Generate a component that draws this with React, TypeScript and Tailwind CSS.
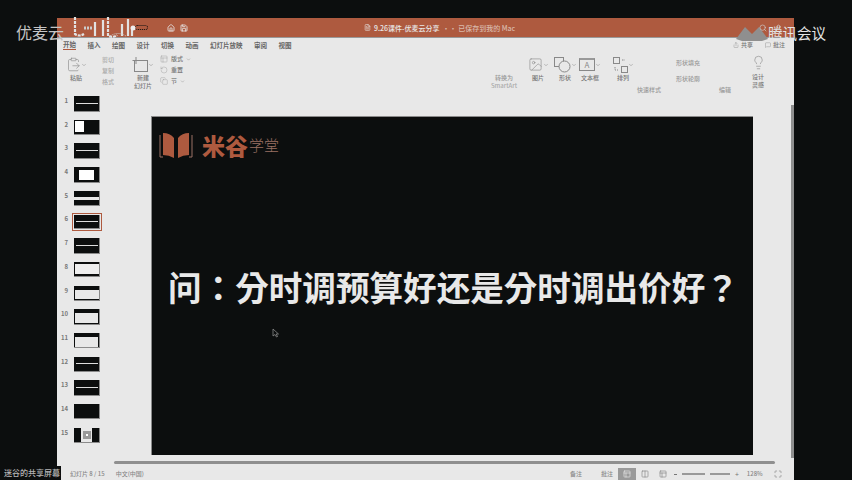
import { ChevronDown, Home, Save, Search, User, ClipboardPaste, Image, Layout, RotateCcw, Columns2, Lightbulb, Copy, Maximize, FileText, Share, MessageSquare } from "lucide-react";

const FONT = '"Noto Sans CJK SC", "Liberation Sans", sans-serif';

const tabs = ["开始", "插入", "绘图", "设计", "切换", "动画", "幻灯片放映", "审阅", "视图"];

// thumbnails: dark or light look only, details are too small to read
const thumbs = [
  { n: 1, look: "line" },
  { n: 2, look: "block" },
  { n: 3, look: "line" },
  { n: 4, look: "card" },
  { n: 5, look: "split" },
  { n: 6, look: "line", active: true },
  { n: 7, look: "line" },
  { n: 8, look: "light" },
  { n: 9, look: "lightTop" },
  { n: 10, look: "light2" },
  { n: 11, look: "light2" },
  { n: 12, look: "line" },
  { n: 13, look: "line" },
  { n: 14, look: "empty" },
  { n: 15, look: "mid" },
];

const Thumb = ({ n, look, active }: { n: number; look: string; active?: boolean }) => (
  <div className="flex h-[23.7px] items-start">
    <span className="w-[17px] pr-[6px] pt-[1px] text-right text-[6px] leading-[8px] font-bold text-[#777]">{n}</span>
    <div
      className={
        active
          ? "-mt-[1px] -ml-[2px] h-[18px] w-[30px] border border-[#ae5a3f] p-[1px]"
          : "h-[15.5px] w-[26px]"
      }
    >
      <div className="relative flex h-full w-full items-center justify-center overflow-hidden border-r border-b border-[#8a8a8a] bg-[#0c0e0e]">
        {look === "line" && <div className="h-[1px] w-[22px] bg-[#ddd]" />}
        {look === "block" && <div className="mr-auto ml-[1px] h-[11px] w-[9px] bg-white" />}
        {look === "card" && <div className="mt-[2px] h-[10px] w-[15px] bg-white" />}
        {look === "split" && <div className="h-[3px] w-full bg-[#e8e8e8]" />}
        {look === "light" && <div className="h-[10px] w-[24px] bg-[#eee]" />}
        {look === "lightTop" && <div className="mt-[3px] h-[9px] w-[24px] bg-[#e8e8e8]" />}
        {look === "light2" && <div className="mt-[3px] h-[10px] w-[23px] bg-[#e8e8e8]" />}
        {look === "mid" && (
          <div className="flex h-full w-[11px] items-center justify-center bg-[#e8e8e8]">
            <div className="flex h-[8px] w-[8px] items-center justify-center bg-[#999]">
              <div className="h-[2px] w-[2px] bg-white" />
            </div>
          </div>
        )}
      </div>
    </div>
  </div>
);

const Small = ({ children, className = "" }: { children: React.ReactNode; className?: string }) => (
  <span className={"text-[6px] leading-[8px] font-medium whitespace-nowrap text-[#777] " + className}>{children}</span>
);

const BigTool = ({ icon, label, sub, width }: { icon: React.ReactNode; label: string; sub?: string; width: string }) => (
  <div className={"flex flex-col items-center " + width}>
    <div className="flex h-[19px] items-center">
      {icon}
      <ChevronDown size={6} className="text-[#888]" />
    </div>
    <Small>{label}</Small>
    {sub && <Small>{sub}</Small>}
  </div>
);

const NewSlideIcon = () => (
  <svg width="16" height="15" viewBox="0 0 16 15" fill="none" stroke="#888">
    <rect x="2.500" y="3.500" width="13" height="11" />
    <path d="M4 0v7M0.500 3.500h7" />
  </svg>
);

const ShapesIcon = () => (
  <svg width="17" height="16" viewBox="0 0 17 16" fill="none" stroke="#888">
    <rect x="0.500" y="0.500" width="9" height="9" />
    <circle cx="10.500" cy="9.500" r="5.500" fill="#e8e8e8" />
  </svg>
);

const TextBoxIcon = () => (
  <div className="flex h-[13px] w-[16px] items-center justify-center border border-t-2 border-[#888] border-t-[#999] text-[8px] leading-[8px] text-[#888]">
    A
  </div>
);

const ArrangeIcon = () => (
  <svg width="16" height="16" viewBox="0 0 16 16" fill="none" stroke="#888">
    <rect x="1.500" y="0.500" width="6" height="6" />
    <rect x="9.500" y="9.500" width="6" height="6" />
    <path d="M10 3h3M3 10v3h3" strokeDasharray="1.500 1" />
  </svg>
);

const Bilibili = () => (
  <svg width="76" height="24" viewBox="0 0 76 24" className="absolute top-[16px] left-[70px]">
    <g stroke="#e2e2e2" strokeWidth="2.200" fill="none">
      <path d="M5 1v17q4 3 9 0" strokeDasharray="3 1" />
      <path d="M25 6v14" />
      <path d="M33 4v16" />
      <path d="M38 1v19q6 2 9-1" strokeDasharray="3 1" />
      <path d="M52 8v12" />
      <path d="M58 3v17" />
      <path d="M62 12v8" />
    </g>
    <circle cx="63" cy="12" r="2.500" fill="#eee" />
    <path d="M14 12h8" stroke="#ccc" strokeWidth="3" strokeDasharray="2 1" />
    <path d="M40 20q8-5 16 0" stroke="#ccc" strokeDasharray="1 1" fill="none" />
  </svg>
);

const BookLogo = () => (
  <svg width="34" height="27" viewBox="0 0 34 27">
    <path d="M1 3v22h3M33 3v22h-3" stroke="#9a7164" fill="none" />
    <path d="M4 1q7 0 11 5v20q-5-3-11-3z" fill="#ae5a3f" />
    <path d="M30 1q-7 0-11 5v20q5-3 11-3z" fill="#ae5a3f" />
  </svg>
);

export default function App() {
  return (
    <div
      className="relative h-[480px] w-[852px] overflow-hidden bg-[#0c0e0e] pt-[18px] pr-[58px] pl-[57px]"
      style={{ fontFamily: FONT }}
    >
      <div className="flex h-[462px] flex-col bg-[#e8e8e8]">
        {/* title bar */}
        <div className="flex h-[19px] items-center bg-[#ae5a3f] text-[#e8e8e8]">
          <div className="ml-[78px] h-[5px] w-[13px] rounded-full border border-dotted border-[#0c0e0e]" />
          <div className="ml-[19px] flex items-center gap-[5px]">
            <Home size={8} strokeWidth={2.500} />
            <Save size={8} strokeWidth={2.500} />
          </div>
          <div className="ml-[176px] flex items-center gap-[3px] text-[7px] leading-[8px] font-medium">
            <FileText size={7} strokeWidth={2} />
            <span>9.26课件-优麦云分享</span>
            <span className="text-[#d9b8aa]">·· 已保存到我的 Mac</span>
          </div>
        </div>
        {/* tabs */}
        <div className="flex h-[15px] items-center gap-[11.500px] border-t border-[#999] pl-[6px]">
          {tabs.map((t, i) => (
            <span
              key={t}
              className={
                "text-[6.500px] leading-[9px] font-bold whitespace-nowrap text-[#666] " +
                (i === 0 ? "border-b border-[#ae5a3f] text-[#555]" : "")
              }
            >
              {t}
            </span>
          ))}
          <div className="ml-auto flex items-center pr-[9px]">
            <Share size={6} className="mr-[2px] text-[#999]" />
            <Small>共享</Small>
            <MessageSquare size={6} className="mr-[2px] ml-[12px] text-[#999]" />
            <Small>批注</Small>
          </div>
        </div>
        {/* ribbon */}
        <div className="flex h-[40px] items-start pt-[3px]">
          <BigTool width="ml-[8px] w-[22px]" label="粘贴" icon={<ClipboardPaste size={15} strokeWidth={1} className="text-[#888]" />} />
          <div className="ml-[15px] flex w-[14px] flex-col gap-[3px] pt-[1px]">
            <Small className="text-[#aaa]">剪切</Small>
            <Small className="text-[#aaa]">复制</Small>
            <Small className="text-[#aaa]">格式</Small>
          </div>
          <BigTool width="ml-[14px] w-[26px]" label="新建" sub="幻灯片" icon={<NewSlideIcon />} />
          <div className="ml-[4px] flex flex-col gap-[3px]">
            <div className="flex items-center gap-[3px]">
              <Layout size={8} strokeWidth={1} className="text-[#888]" />
              <Small>版式</Small>
              <ChevronDown size={5} className="text-[#888]" />
            </div>
            <div className="flex items-center gap-[3px]">
              <RotateCcw size={8} strokeWidth={1} className="text-[#888]" />
              <Small>重置</Small>
            </div>
            <div className="flex items-center gap-[3px]">
              <Copy size={8} strokeWidth={1} className="text-[#888]" />
              <Small>节</Small>
              <ChevronDown size={5} className="text-[#888]" />
            </div>
          </div>
          <div className="ml-[298px] flex w-[30px] flex-col items-center pt-[19px]">
            <Small className="text-[#999]">转换为</Small>
            <Small className="text-[5px] text-[#aaa]">SmartArt</Small>
          </div>
          <BigTool width="ml-[7px] w-[24px]" label="图片" icon={<Image size={15} strokeWidth={1} className="text-[#888]" />} />
          <BigTool width="ml-[3px] w-[24px]" label="形状" icon={<ShapesIcon />} />
          <BigTool width="ml-[1px] w-[24px]" label="文本框" icon={<TextBoxIcon />} />
          <BigTool width="ml-[9px] w-[24px]" label="排列" icon={<ArrangeIcon />} />
          <div className="ml-[2px] w-[26px] pt-[18px]">
            <Small className="text-[#999]">快速样式</Small>
          </div>
          <div className="ml-[13px] flex w-[30px] flex-col gap-[8px] pt-[4px]">
            <Small className="text-[#999]">形状填充</Small>
            <Small className="text-[#999]">形状轮廓</Small>
          </div>
          <div className="ml-[13px] w-[22px] pt-[18px]">
            <Small className="text-[#999]">编辑</Small>
          </div>
          <div className="ml-[8px] flex w-[18px] flex-col items-center">
            <Lightbulb size={15} strokeWidth={1} className="mb-[3px] text-[#888]" />
            <Small>设计</Small>
            <Small>灵感</Small>
          </div>
        </div>
        {/* thumbnails + slide */}
        <div className="flex h-[369px]">
          <div className="w-[94px] pt-[4px]">
            {thumbs.map((t) => (
              <Thumb key={t.n} {...t} />
            ))}
          </div>
          <div className="mt-[24px] flex h-[339px] w-[602px] flex-col border-t border-l border-[#8a8a8a] bg-[#0c0e0e]">
            <div className="ml-[7px] mt-[14px] flex items-center">
              <BookLogo />
              <span className="ml-[9px] text-[23px] leading-[28px] font-black text-[#ae5a3f]">米谷</span>
              <span className="ml-[1px] text-[15px] leading-[28px] font-light text-[#9a7164]">学堂</span>
            </div>
            <div className="mt-[104px] pl-[16px] font-['Noto_Sans_CJK_TC',sans-serif] text-[33.600px] leading-[48px] font-bold whitespace-nowrap text-[#e8e8e8]">
              问：分时调预算好还是分时调出价好？
            </div>
          </div>
          <div className="mt-[13px] ml-[38px] h-[353px] w-[3px] bg-[#8f8f8f]" />
        </div>
        {/* horizontal scrollbar */}
        <div className="ml-[57px] h-[3px] w-[661px] rounded-full bg-[#8f8f8f]" />
        {/* status bar */}
        <div className="mt-[4px] flex h-[12px] items-center">
          <Small className="ml-[13px] text-[#888]">幻灯片 8 / 15</Small>
          <Small className="ml-[11px] text-[#888]">中文(中国)</Small>
          <Small className="ml-[426px] text-[#888]">备注</Small>
          <Small className="ml-[19px] text-[#888]">批注</Small>
          <div className="ml-[5px] flex h-[12px] w-[18px] items-center justify-center bg-[#9a9a9a]">
            <Layout size={8} className="text-[#e8e8e8]" />
          </div>
          <Columns2 size={8} className="ml-[5px] text-[#888]" />
          <Layout size={8} className="ml-[10px] text-[#888]" />
          <div className="ml-[7px] flex items-center gap-[2px]">
            <div className="h-[1px] w-[3px] bg-[#777]" />
            <div className="ml-[3px] h-[2px] w-[23px] bg-[#999]" />
            <div className="ml-[3px] h-[2px] w-[20px] bg-[#999]" />
            <span className="ml-[3px] text-[7px] leading-[8px] text-[#777]">+</span>
          </div>
          <Small className="ml-[8px] text-[#888]">128%</Small>
          <Maximize size={8} className="ml-[11px] text-[#888]" />
        </div>
      </div>

      {/* mouse pointer */}
      <svg width="7" height="10" viewBox="0 0 7 10" className="absolute top-[328px] left-[272px]">
        <path d="M1 1v7l2-1.500L4.500 9l1-.5L4.200 6H6.500z" fill="#0c0e0e" stroke="#999" strokeWidth="0.700" />
      </svg>

      {/* recording watermarks sit on top of the capture */}
      <span className="absolute top-[21px] left-[16px] text-[16px] leading-[22px] text-[#c4c4c4]">优麦云</span>
      <Bilibili />
      <div className="absolute top-[25px] left-[736px] flex h-[16px] items-center">
        <svg width="32" height="16" viewBox="0 0 32 16">
          <path d="M0 14 9 2l7 7 7-7 9 12-6 2H6z" fill="#8f8f8f" />
        </svg>
        <span className="text-[14.500px] leading-[16px] text-[#e4e4e4]">腾讯会议</span>
      </div>
      <Search size={8} className="absolute top-[24px] left-[759px] text-[#ccc]" />
      <User size={9} className="absolute top-[24px] left-[774px] text-[#ccc]" />
      <div className="absolute bottom-0 left-0 bg-[#0c0e0e] py-[1px] pr-[1px] pl-[4px] text-[8px] leading-[12px] font-medium text-[#b5b5b5]">
        迷谷的共享屏幕
      </div>
    </div>
  );
}
